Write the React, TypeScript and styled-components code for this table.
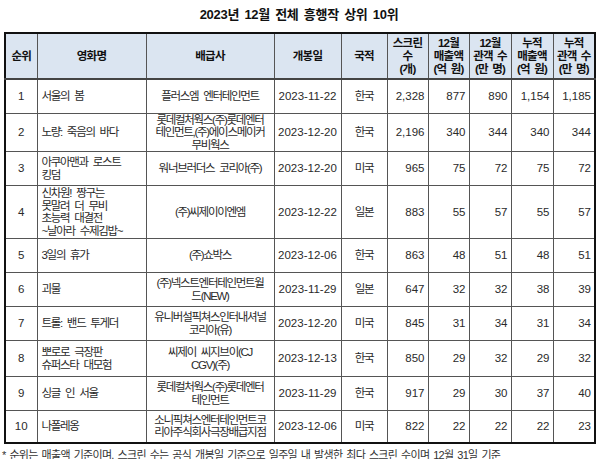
import React from "react";
import styled, { createGlobalStyle } from "styled-components";

const Global = createGlobalStyle`
  html, body { margin: 0; padding: 0; background: #fff; }
  body { font-family: "Liberation Sans", "Noto Sans CJK KR", sans-serif; color: #2a2a2a; }
`;

const Page = styled.div`
  width: 600px;
  height: 459px;
  padding: 0 6px 0 4px;
  box-sizing: border-box;
  overflow: hidden;
`;

const Title = styled.h1`
  margin: 0;
  height: 32px;
  line-height: 30px;
  text-align: center;
  font-size: 13px;
  font-weight: bold;
  color: #111;
  letter-spacing: -0.3px;
  word-spacing: 2px;
`;

const Table = styled.table`
  width: 590px;
  table-layout: fixed;
  border-collapse: collapse;
  border: 2px solid #111;
  font-size: 11.5px;
`;

const Head = styled.th`
  background: #dbe5f1;
  border: 1px solid #555;
  border-bottom: 2px solid #444;
  height: 44px;
  padding: 0;
  font-weight: bold;
  color: #111;
  line-height: 13px;
  letter-spacing: -0.8px;
  word-spacing: 2px;
  text-align: center;
`;

const Row = styled.tr<{ $h: number }>`
  height: ${(p) => p.$h}px;
`;

const Cell = styled.td<{ $align?: "left" | "center" | "right"; $ko?: boolean }>`
  border: 1px solid #555;
  padding: 0 ${(p) => (p.$align === "right" ? "3px" : "2px")} 0 ${(p) => (p.$align === "left" ? "4px" : "2px")};
  text-align: ${(p) => p.$align || "center"};
  vertical-align: middle;
  line-height: 12.5px;
  letter-spacing: ${(p) => (p.$ko ? "-1.3px" : "0")};
  word-spacing: ${(p) => (p.$ko ? "3px" : "0")};
  white-space: nowrap;
  overflow: hidden;
`;

const Note = styled.p`
  margin: 2px 0 0 -2px;
  font-size: 11px;
  color: #333;
  letter-spacing: -0.7px;
  word-spacing: 1.5px;
  white-space: nowrap;
`;

type Movie = {
  rank: number;
  title: string[];
  dist: string[];
  date: string;
  nation: string;
  screens: string;
  sales: string;
  aud: string;
  cumSales: string;
  cumAud: string;
  h: number;
};

const movies: Movie[] = [
  { rank: 1, title: ["서울의 봄"], dist: ["플러스엠 엔터테인먼트"], date: "2023-11-22", nation: "한국", screens: "2,328", sales: "877", aud: "890", cumSales: "1,154", cumAud: "1,185", h: 34 },
  { rank: 2, title: ["노량: 죽음의 바다"], dist: ["롯데컬처웍스(주)롯데엔터", "테인먼트,(주)에이스메이커", "무비웍스"], date: "2023-12-20", nation: "한국", screens: "2,196", sales: "340", aud: "344", cumSales: "340", cumAud: "344", h: 38 },
  { rank: 3, title: ["아쿠아맨과 로스트", "킹덤"], dist: ["워너브러더스 코리아(주)"], date: "2023-12-20", nation: "미국", screens: "965", sales: "75", aud: "72", cumSales: "75", cumAud: "72", h: 34 },
  { rank: 4, title: ["신차원! 짱구는", "못말려 더 무비", "초능력 대결전", "~날아라 수제김밥~"], dist: ["(주)씨제이이엔엠"], date: "2023-12-22", nation: "일본", screens: "883", sales: "55", aud: "57", cumSales: "55", cumAud: "57", h: 53 },
  { rank: 5, title: ["3일의 휴가"], dist: ["(주)쇼박스"], date: "2023-12-06", nation: "한국", screens: "863", sales: "48", aud: "51", cumSales: "48", cumAud: "51", h: 34 },
  { rank: 6, title: ["괴물"], dist: ["(주)넥스트엔터테인먼트월", "드(NEW)"], date: "2023-11-29", nation: "일본", screens: "647", sales: "32", aud: "32", cumSales: "38", cumAud: "39", h: 34 },
  { rank: 7, title: ["트롤: 밴드 투게더"], dist: ["유니버설픽쳐스인터내셔널", "코리아(유)"], date: "2023-12-20", nation: "미국", screens: "845", sales: "31", aud: "34", cumSales: "31", cumAud: "34", h: 34 },
  { rank: 8, title: ["뽀로로 극장판", "슈퍼스타 대모험"], dist: ["씨제이 씨지브이(CJ", "CGV)(주)"], date: "2023-12-13", nation: "한국", screens: "850", sales: "29", aud: "32", cumSales: "29", cumAud: "32", h: 36 },
  { rank: 9, title: ["싱글 인 서울"], dist: ["롯데컬처웍스(주)롯데엔터", "테인먼트"], date: "2023-11-29", nation: "한국", screens: "917", sales: "29", aud: "30", cumSales: "37", cumAud: "40", h: 34 },
  { rank: 10, title: ["나폴레옹"], dist: ["소니픽쳐스엔터테인먼트코", "리아주식회사극장배급지점"], date: "2023-12-06", nation: "미국", screens: "822", sales: "22", aud: "22", cumSales: "22", cumAud: "23", h: 32 },
];

const widths = [32, 109, 128, 67, 46, 41, 41, 42, 42, 42];

const headers: string[][] = [
  ["순위"],
  ["영화명"],
  ["배급사"],
  ["개봉일"],
  ["국적"],
  ["스크린", "수", "(개)"],
  ["12월", "매출액", "(억 원)"],
  ["12월", "관객 수", "(만 명)"],
  ["누적", "매출액", "(억 원)"],
  ["누적", "관객 수", "(만 명)"],
];

const Lines = ({ lines }: { lines: string[] }) => (
  <>
    {lines.map((l, i) => (
      <React.Fragment key={i}>
        {i > 0 && <br />}
        {l}
      </React.Fragment>
    ))}
  </>
);

export default function App() {
  return (
    <Page>
      <Global />
      <Title>2023년 12월 전체 흥행작 상위 10위</Title>
      <Table>
        <colgroup>
          {widths.map((w, i) => (
            <col key={i} style={{ width: w }} />
          ))}
        </colgroup>
        <thead>
          <tr>
            {headers.map((h, i) => (
              <Head key={i}>
                <Lines lines={h} />
              </Head>
            ))}
          </tr>
        </thead>
        <tbody>
          {movies.map((m) => (
            <Row key={m.rank} $h={m.h}>
              <Cell>{m.rank}</Cell>
              <Cell $align="left" $ko>
                <Lines lines={m.title} />
              </Cell>
              <Cell $ko>
                <Lines lines={m.dist} />
              </Cell>
              <Cell>{m.date}</Cell>
              <Cell $ko>{m.nation}</Cell>
              <Cell $align="right">{m.screens}</Cell>
              <Cell $align="right">{m.sales}</Cell>
              <Cell $align="right">{m.aud}</Cell>
              <Cell $align="right">{m.cumSales}</Cell>
              <Cell $align="right">{m.cumAud}</Cell>
            </Row>
          ))}
        </tbody>
      </Table>
      <Note>* 순위는 매출액 기준이며, 스크린 수는 공식 개봉일 기준으로 일주일 내 발생한 최다 스크린 수이며 12월 31일 기준</Note>
    </Page>
  );
}
